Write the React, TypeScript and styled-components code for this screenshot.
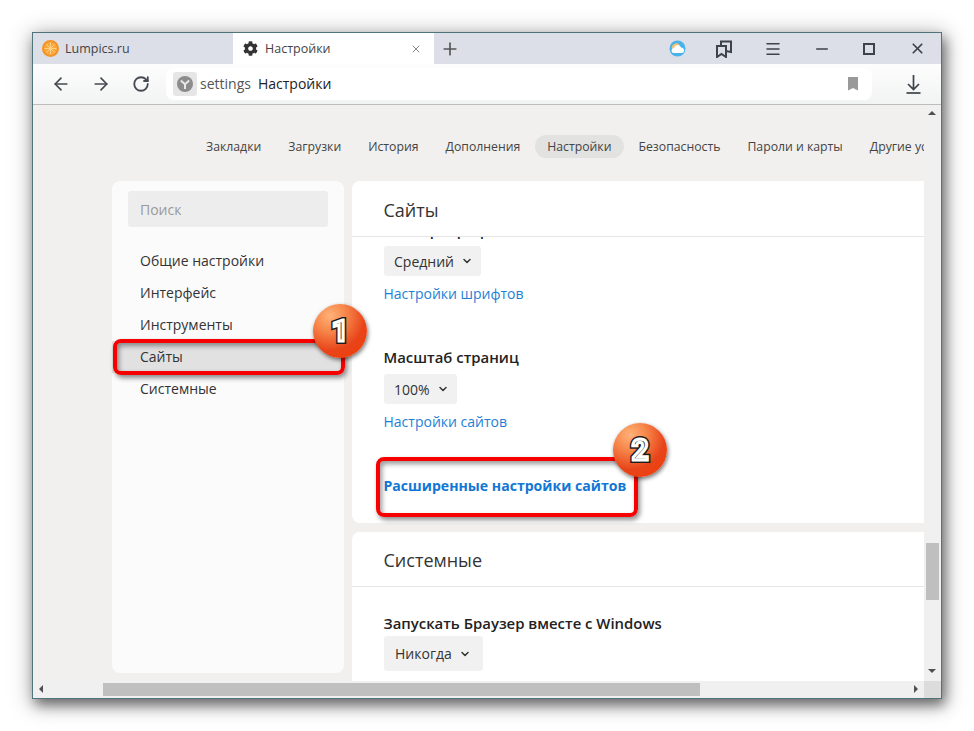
import React from 'react';
import styled, { createGlobalStyle } from 'styled-components';
import { ArrowLeft, ArrowRight, RotateCw, Plus, X, Minus, Menu, ChevronDown } from 'lucide-react';
import { FaCog } from 'react-icons/fa';

/* Global =========================================================== */
const GlobalStyle = createGlobalStyle`
    html, body {
        margin: 0;
        padding: 0;
        background: #fff;
    }
    body {
        box-sizing: border-box;
        min-height: 731px;
        padding: 32px 0 0 32px;
        font-family: 'Open Sans', 'Noto Sans', sans-serif;
        color: #222;
    }
`;

/* Window =========================================================== */
const Window = styled.div`
    position: relative;
    box-sizing: border-box;
    width: 910px;
    height: 667px;
    border: 1px solid #4f757b;
    background: #f1f0ee;
    box-shadow: 3px 6px 12px rgba(0, 0, 0, 0.5), 1px 3px 22px 2px rgba(0, 0, 0, 0.25);
    display: flex;
    flex-direction: column;
`;
const TabBar = styled.div`
    height: 31px;
    flex: none;
    background: #dcdfe7;
    display: flex;
    align-items: center;
    color: #3d434a;
`;
const Tab = styled.div<{ $active?: boolean }>`
    box-sizing: border-box;
    width: 200px;
    height: 100%;
    padding-left: 9px;
    display: flex;
    align-items: center;
    gap: 6px;
    font-size: 12.5px;
    color: #444;
    background: ${(p) => (p.$active ? '#fff' : 'transparent')};
    > span {
        flex: 1;
    }
`;
const ActiveTab = styled(Tab)`
    padding: 0 12px 0 10px;
    width: 201px;
    gap: 7px;
`;
const NewTab = styled.div`
    width: 32px;
    display: flex;
    justify-content: center;
`;
const TabSpacer = styled.div`
    flex: 1;
`;
const WindowButton = styled.div<{ $w: number }>`
    width: ${(p) => p.$w}px;
    display: flex;
    justify-content: center;
    align-items: center;
`;
const Toolbar = styled.div`
    box-sizing: border-box;
    height: 41px;
    flex: none;
    padding: 4px 0 4px 8px;
    background: linear-gradient(#fdfdfd, #f2f3f3);
    border-bottom: 1px solid #bdbdbd;
    display: flex;
    align-items: center;
    color: #444a50;
`;
const NavButton = styled.div`
    width: 40px;
    display: flex;
    justify-content: center;
`;
const AddressBar = styled.div`
    box-sizing: border-box;
    width: 706px;
    height: 32px;
    margin-left: 5px;
    padding: 4px 14px 4px 7px;
    border-radius: 8px;
    background: #fff;
    display: flex;
    align-items: center;
    font-size: 14px;
`;
const SiteIcon = styled.div`
    width: 24px;
    height: 24px;
    border-radius: 3px;
    background: #e6e6e6;
    display: flex;
    align-items: center;
    justify-content: center;
    margin-right: 3px;
`;
const Scheme = styled.span`
    color: #555;
    margin: -2px 7px 0 0;
`;
const PageTitle = styled.span`
    color: #222;
    flex: 1;
    margin-top: -2px;
`;
const DownloadButton = styled.div`
    flex: 1;
    padding-left: 14px;
    display: flex;
    justify-content: center;
`;

/* Page =========================================================== */
const Viewport = styled.div`
    flex: 1;
    min-height: 0;
    display: flex;
`;
const Scroller = styled.div`
    flex: 1;
    min-width: 0;
    overflow: hidden;
    padding-top: 29px;
`;
const SectionNav = styled.nav`
    height: 24px;
    padding-left: 161px;
    display: flex;
    align-items: center;
    gap: 3px;
    white-space: nowrap;
    overflow: hidden;
`;
const NavItem = styled.div<{ $active?: boolean }>`
    height: 23px;
    line-height: 23px;
    padding: 0 12px;
    border-radius: 12px;
    font-size: 12.25px;
    color: #444;
    background: ${(p) => (p.$active ? '#e2e2e0' : 'transparent')};
`;
const Columns = styled.div`
    margin: 23px 0 0 79px;
    display: flex;
    gap: 8px;
    align-items: flex-start;
`;
const Sidebar = styled.aside`
    box-sizing: border-box;
    width: 232px;
    height: 492px;
    padding: 10px 16px;
    border-radius: 8px;
    background: #fbfbfb;
`;
const SearchBox = styled.div`
    height: 36px;
    line-height: 37px;
    padding-left: 12px;
    border-radius: 3px;
    background: #ededed;
    color: #9a9a9a;
    font-size: 14px;
    margin-bottom: 18px;
`;
const SideItem = styled.div`
    height: 32px;
    line-height: 32px;
    padding-left: 12px;
    font-size: 14px;
    color: #333;
`;
const ActiveSideItem = styled(SideItem)`
    margin: 0 -16px;
    padding-left: 28px;
    background: #e1e1e1;
`;
const Main = styled.main`
    flex: 1;
    min-width: 0;
    display: flex;
    flex-direction: column;
    gap: 9px;
`;
const Card = styled.section`
    background: #fff;
    border-radius: 8px 0 0 8px;
    overflow: hidden;
`;
const CardTitle = styled.h2<{ $h: number }>`
    margin: 0;
    box-sizing: border-box;
    height: ${(p) => p.$h}px;
    padding: 0 32px 0 31.5px;
    line-height: ${(p) => p.$h + 2}px;
    font-size: 18px;
    font-weight: 400;
    color: #333;
    border-bottom: 1px solid #e6e6e6;
`;
const CardBody = styled.div`
    padding: 0 32px;
    height: 286px;
    overflow: hidden;
`;
const ClippedLabel = styled.div`
    height: 3px;
    display: flex;
    align-items: flex-end;
    font-size: 14.9px;
    font-weight: 600;
    line-height: 20px;
    overflow: hidden;
    margin-bottom: 6px;
`;
const FieldLabel = styled.div<{ $gap: number }>`
    margin: 0 0 ${(p) => p.$gap}px -0.5px;
    font-size: 14.9px;
    font-weight: 600;
    line-height: 20px;
    color: #222;
`;
const Select = styled.div<{ $large?: boolean }>`
    display: inline-flex;
    align-items: center;
    gap: 7px;
    height: ${(p) => (p.$large ? 35 : 30)}px;
    padding: 0 ${(p) => (p.$large ? 12 : 8)}px 0 ${(p) => (p.$large ? 11 : 10)}px;
    border-radius: 3px;
    background: #f1f1f1;
    font-size: 14px;
    color: #333;
`;
const FieldLink = styled.a`
    display: block;
    margin: 8px 0 0 -0.5px;
    font-size: 14px;
    line-height: 20px;
    color: #1e7fd6;
`;
const Gap = styled.div<{ $h: number }>`
    height: ${(p) => p.$h}px;
`;
const StrongLink = styled.a`
    display: block;
    margin-left: -0.5px;
    font-size: 14.1px;
    font-weight: 700;
    line-height: 20px;
    color: #1277d4;
`;

/* Scrollbars =========================================================== */
const VScroll = styled.div`
    box-sizing: border-box;
    position: relative;
    flex: none;
    width: 17px;
    background: #f0f0f0;
`;
const VThumb = styled.div`
    position: absolute;
    top: 438px;
    left: 2px;
    width: 13px;
    height: 57px;
    background: #bfbfbf;
`;
const HScrollRow = styled.div`
    flex: none;
    height: 17px;
    display: flex;
    background: #f0f0f0;
    position: relative;
`;
const HThumb = styled.div`
    position: absolute;
    left: 70px;
    top: 2px;
    width: 597px;
    height: 13px;
    background: #bfbfbf;
`;
const Corner = styled.div`
    margin-left: auto;
    width: 17px;
    background: #dcdcdc;
`;
const Arrow = styled.div<{ $dir: 'up' | 'down' | 'left' | 'right' }>`
    position: absolute;
    width: 0;
    height: 0;
    border: 4px solid transparent;
    ${(p) => p.$dir === 'up' && 'top: 2px; left: 4px; border-bottom-color: #505050;'}
    ${(p) => p.$dir === 'down' && 'bottom: 4px; left: 4px; border-top-color: #505050;'}
    ${(p) => p.$dir === 'left' && 'top: 4px; left: 2px; border-right-color: #505050;'}
    ${(p) => p.$dir === 'right' && 'top: 4px; right: 19px; border-left-color: #505050;'}
`;

/* Annotations =========================================================== */
const Highlight = styled.div<{ $l: number; $t: number; $w: number; $h: number }>`
    position: absolute;
    box-sizing: border-box;
    left: ${(p) => p.$l}px;
    top: ${(p) => p.$t}px;
    width: ${(p) => p.$w}px;
    height: ${(p) => p.$h}px;
    border: 4px solid #f70000;
    border-radius: 8px;
    box-shadow: 2px 3px 5px rgba(0, 0, 0, 0.45), inset 2px 3px 5px rgba(0, 0, 0, 0.4);
`;
const Badge = styled.div<{ $l: number; $t: number }>`
    position: absolute;
    box-sizing: border-box;
    left: ${(p) => p.$l}px;
    top: ${(p) => p.$t}px;
    width: 54px;
    height: 54px;
    border-radius: 50%;
    background: radial-gradient(circle at 32% 22%, #ffb27a 0%, #f7874a 28%, #e8441a 62%, #f23c05 100%);
    box-shadow: 1px 2px 4px rgba(0, 0, 0, 0.55);
    display: flex;
    align-items: center;
    justify-content: center;
    font-family: Roboto, 'Liberation Sans', sans-serif;
    font-size: 29px;
    font-weight: 700;
    color: #1c1c1c;
    -webkit-text-stroke: 6px #1c1c1c;
    > span {
        position: relative;
    }
    > span::after {
        content: attr(data-n);
        position: absolute;
        left: 0;
        top: 0;
        color: #333;
        -webkit-text-stroke: 3px #fff;
    }
`;

/* Icons =========================================================== */
const OrangeIcon = () => (
    <svg width="17" height="17" viewBox="0 0 17 17">
        <circle cx="8.5" cy="8.5" r="8.5" fill="#f39325" />
        <circle cx="8.5" cy="8.5" r="6.500" fill="#fba83a" />
        <g stroke="#fcd08a" strokeWidth="1">
            <path d="M8.500 2.500v12M2.500 8.500h12M4.300 4.300l8.400 8.400M12.700 4.300l-8.400 8.400" />
        </g>
    </svg>
);
const YandexIcon = () => (
    <svg width="16" height="16" viewBox="0 0 16 16">
        <circle cx="8" cy="8" r="8" fill="#8c8c8c" />
        <path d="M3.800 4.400 8 8.200l4.200-3.800M8 8v5" stroke="#e8e8e8" strokeWidth="2" fill="none" />
    </svg>
);
const WeatherIcon = () => (
    <svg width="17" height="17" viewBox="0 0 17 17">
        <circle cx="8.500" cy="8.500" r="8" fill="#48b3ea" />
        <path d="M2.500 8a5 5 0 0 1 8-3.600L5 9z" fill="#f7c072" />
        <path d="M5 13a2.500 2.500 0 0 1 .1-5 3.600 3.600 0 0 1 6.900-.6A2.800 2.800 0 0 1 12.500 13z" fill="#fff" />
    </svg>
);
const CollectionsIcon = () => (
    <svg width="16" height="18" viewBox="0 0 16 18" fill="none" stroke="#3d434a" strokeWidth="2">
        <path d="M1 6h9v11l-4.500-3L1 17z" />
        <path d="M5 6V1.500h10V12l-5-1" />
    </svg>
);
const MaximizeIcon = () => (
    <svg width="12" height="12" viewBox="0 0 12 12">
        <rect x="1" y="1" width="10" height="10" fill="none" stroke="#3d434a" strokeWidth="2" />
    </svg>
);
const BookmarkIcon = () => (
    <svg width="10" height="14" viewBox="0 0 10 14">
        <path d="M0 0h10v13.500L5 11 0 13.500z" fill="#999" />
    </svg>
);
const DownloadIcon = () => (
    <svg width="15" height="19" viewBox="0 0 15 19" fill="none" stroke="#3d434a" strokeWidth="1.700">
        <path d="M7.500 0v14M2 9l5.500 5.500L13 9" />
        <path d="M0.500 18h14" />
    </svg>
);

export default function App() {
    return (
        <>
            <GlobalStyle />
            <Window>
                <TabBar>
                    <Tab>
                        <OrangeIcon />
                        <span>Lumpics.ru</span>
                    </Tab>
                    <ActiveTab $active>
                        <FaCog size={15} color="#333" />
                        <span>Настройки</span>
                        <X size={12} color="#888" />
                    </ActiveTab>
                    <NewTab>
                        <Plus size={20} color="#555" />
                    </NewTab>
                    <TabSpacer />
                    <WindowButton $w={46}><WeatherIcon /></WindowButton>
                    <WindowButton $w={48}><CollectionsIcon /></WindowButton>
                    <WindowButton $w={50}><Menu size={18} strokeWidth={2} /></WindowButton>
                    <WindowButton $w={47}><Minus size={18} strokeWidth={2.2} /></WindowButton>
                    <WindowButton $w={48}><MaximizeIcon /></WindowButton>
                    <WindowButton $w={48}><X size={17} strokeWidth={2.4} /></WindowButton>
                </TabBar>
                <Toolbar>
                    <NavButton><ArrowLeft size={20} /></NavButton>
                    <NavButton><ArrowRight size={20} /></NavButton>
                    <NavButton><RotateCw size={18} strokeWidth={2.4} /></NavButton>
                    <AddressBar>
                        <SiteIcon><YandexIcon /></SiteIcon>
                        <Scheme>settings</Scheme>
                        <PageTitle>Настройки</PageTitle>
                        <BookmarkIcon />
                    </AddressBar>
                    <DownloadButton><DownloadIcon /></DownloadButton>
                </Toolbar>
                <Viewport>
                    <Scroller>
                        <SectionNav>
                            <NavItem>Закладки</NavItem>
                            <NavItem>Загрузки</NavItem>
                            <NavItem>История</NavItem>
                            <NavItem>Дополнения</NavItem>
                            <NavItem $active>Настройки</NavItem>
                            <NavItem>Безопасность</NavItem>
                            <NavItem>Пароли и карты</NavItem>
                            <NavItem>Другие устройства</NavItem>
                        </SectionNav>
                        <Columns>
                            <Sidebar>
                                <SearchBox>Поиск</SearchBox>
                                <SideItem>Общие настройки</SideItem>
                                <SideItem>Интерфейс</SideItem>
                                <SideItem>Инструменты</SideItem>
                                <ActiveSideItem>Сайты</ActiveSideItem>
                                <SideItem>Системные</SideItem>
                            </Sidebar>
                            <Main>
                                <Card>
                                    <CardTitle $h={56}>Сайты</CardTitle>
                                    <CardBody>
                                        <ClippedLabel>Размер шрифта</ClippedLabel>
                                        <Select>Средний <ChevronDown size={12} strokeWidth={3} /></Select>
                                        <FieldLink>Настройки шрифтов</FieldLink>
                                        <Gap $h={43} />
                                        <FieldLabel $gap={7}>Масштаб страниц</FieldLabel>
                                        <Select>100% <ChevronDown size={12} strokeWidth={3} /></Select>
                                        <FieldLink>Настройки сайтов</FieldLink>
                                        <Gap $h={44} />
                                        <StrongLink>Расширенные настройки сайтов</StrongLink>
                                    </CardBody>
                                </Card>
                                <Card>
                                    <CardTitle $h={55}>Системные</CardTitle>
                                    <CardBody>
                                        <Gap $h={26} />
                                        <FieldLabel $gap={3}>Запускать Браузер вместе с Windows</FieldLabel>
                                        <Select $large>Никогда <ChevronDown size={12} strokeWidth={3} /></Select>
                                    </CardBody>
                                </Card>
                            </Main>
                        </Columns>
                    </Scroller>
                    <VScroll>
                        <Arrow $dir="up" />
                        <VThumb />
                        <Arrow $dir="down" />
                    </VScroll>
                </Viewport>
                <HScrollRow>
                    <Arrow $dir="left" />
                    <HThumb />
                    <Arrow $dir="right" />
                    <Corner />
                </HScrollRow>
                <Highlight $l={80} $t={306} $w={232} $h={36} />
                <Highlight $l={343} $t={424} $w={262} $h={60} />
                <Badge $l={280} $t={271}><span data-n="1">1</span></Badge>
                <Badge $l={580} $t={390}><span data-n="2">2</span></Badge>
            </Window>
        </>
    );
}
